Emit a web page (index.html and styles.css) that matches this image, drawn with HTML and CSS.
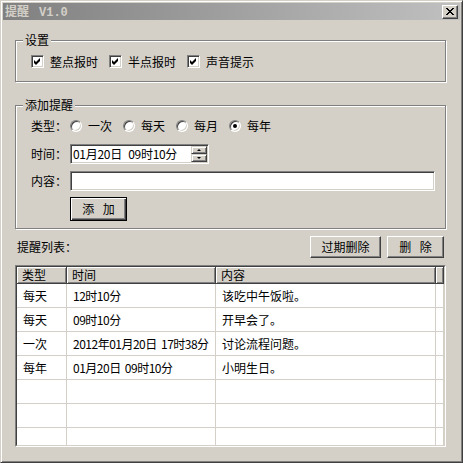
FILE: index.html
```html
<!DOCTYPE html>
<html lang="zh-CN">
<head>
  <meta charset="UTF-8" />
  <title>提醒 V1.0</title>
  <link rel="stylesheet" href="styles.css">
</head>
<body>
  <div class="window">
    <div class="titlebar">
      <span class="title">提醒<span class="ver">V1.0</span></span>
      <button class="close">
        <svg width="8" height="7" viewBox="0 0 8 7" shape-rendering="crispEdges">
          <path d="M0 0h2v1h1v1h2v-1h1v-1h2v1h-1v1h-1v1h-1v1h1v1h1v1h1v1h-2v-1h-1v-1h-2v1h-1v1h-2v-1h1v-1h1v-1h1v-1h-1v-1h-1v-1h-1z" fill="#000"/>
        </svg>
      </button>
    </div>

    <div class="content">
      <fieldset class="group group-settings">
        <legend>设置</legend>
        <div class="options">
          <label class="check"><span class="box"><svg width="7" height="7" viewBox="0 0 7 7"><polygon points="0,2 2,4 6,0 6,3 2,7 0,5" fill="#000"/></svg></span>整点报时</label>
          <label class="check"><span class="box"><svg width="7" height="7" viewBox="0 0 7 7"><polygon points="0,2 2,4 6,0 6,3 2,7 0,5" fill="#000"/></svg></span>半点报时</label>
          <label class="check"><span class="box"><svg width="7" height="7" viewBox="0 0 7 7"><polygon points="0,2 2,4 6,0 6,3 2,7 0,5" fill="#000"/></svg></span>声音提示</label>
        </div>
      </fieldset>

      <fieldset class="group group-add">
        <legend>添加提醒</legend>
        <div class="row">
          <span class="label">类型：</span>
          <div class="radios">
            <label class="radio"><span class="dot"></span>一次</label>
            <label class="radio"><span class="dot"></span>每天</label>
            <label class="radio"><span class="dot"></span>每月</label>
            <label class="radio"><span class="dot checked"></span>每年</label>
          </div>
        </div>
        <div class="row row-time">
          <span class="label">时间：</span>
          <div class="field date">
            <span>01月20日 09时10分</span>
            <div class="spin">
              <span class="spin-btn"><i class="arrow up"></i></span>
              <span class="spin-btn"><i class="arrow down"></i></span>
            </div>
          </div>
        </div>
        <div class="row row-text">
          <span class="label">内容：</span>
          <div class="field text"></div>
        </div>
        <div class="row-btn">
          <button class="btn btn-default">添 加</button>
        </div>
      </fieldset>

      <div class="list-bar">
        <span>提醒列表：</span>
        <div class="actions">
          <button class="btn btn-wide">过期删除</button>
          <button class="btn">删 除</button>
        </div>
      </div>

      <div class="list">
        <div class="list-inner">
          <div class="list-head">
            <span>类型</span><span>时间</span><span>内容</span><span></span>
          </div>
          <div class="list-row"><span>每天</span><span>12时10分</span><span>该吃中午饭啦。</span><span></span></div>
          <div class="list-row"><span>每天</span><span>09时10分</span><span>开早会了。</span><span></span></div>
          <div class="list-row"><span>一次</span><span>2012年01月20日 17时38分</span><span>讨论流程问题。</span><span></span></div>
          <div class="list-row"><span>每年</span><span>01月20日 09时10分</span><span>小明生日。</span><span></span></div>
          <div class="list-row"><span></span><span></span><span></span><span></span></div>
          <div class="list-row"><span></span><span></span><span></span><span></span></div>
          <div class="list-row"><span></span><span></span><span></span><span></span></div>
        </div>
      </div>
    </div>
  </div>
</body>
</html>
```

FILE: styles.css
```css
body {
  margin: 0;
  font-family: "Noto Sans CJK SC", sans-serif;
  font-size: 12px;
  line-height: 14px;
  word-spacing: 3px;
  color: #000;
  background: #d4d0c8;
}
.window {
  box-sizing: border-box;
  width: 463px;
  height: 463px;
  padding: 2px;
  background: #d4d0c8;
  border: 1px solid;
  border-color: #d4d0c8 #404040 #404040 #d4d0c8;
  box-shadow: inset 1px 1px 0 #fff, inset -1px -1px 0 #808080;
  display: flex;
  flex-direction: column;
}
.titlebar {
  height: 17px;
  padding: 0 2px;
  display: flex;
  align-items: center;
  justify-content: space-between;
  background: linear-gradient(to right, #808080, #c0c0c0);
}
.title {
  font-weight: bold;
  color: #d4d0c8;
}
.ver {
  margin-left: 10px;
  font-family: "Liberation Mono", monospace;
}
.close {
  box-sizing: border-box;
  width: 16px;
  height: 14px;
  padding: 0;
  border: 1px solid;
  border-color: #fff #404040 #404040 #fff;
  box-shadow: inset -1px -1px 0 #808080;
  background: #d4d0c8;
  display: flex;
  align-items: center;
  justify-content: center;
}
.content {
  padding: 0 14px 0 12px;
  display: flex;
  flex-direction: column;
}
.group {
  margin: 13px 0 0;
  padding: 8px 15px 13px;
  border: 1px solid #808080;
  box-shadow: 1px 1px 0 #fff, inset 1px 1px 0 #fff;
  min-width: 0;
}
.group legend {
  padding: 0 2px;
  margin-left: -8px;
  line-height: 14px;
  background: #d4d0c8;
}
.group-add {
  margin-top: 16px;
  padding: 4px 8px 7px 15px;
}
.options {
  display: flex;
  align-items: center;
  gap: 11px;
  height: 13px;
}
.check {
  display: flex;
  align-items: center;
  gap: 6px;
}
.box {
  box-sizing: border-box;
  width: 13px;
  height: 13px;
  border: 1px solid;
  border-color: #808080 #fff #fff #808080;
  box-shadow: inset 1px 1px 0 #404040, inset -1px -1px 0 #d4d0c8;
  background: #fff;
  display: flex;
  align-items: center;
  justify-content: center;
}
.row {
  display: flex;
  align-items: center;
  height: 20px;
}
.row-time {
  margin-top: 8px;
}
.row-text {
  margin-top: 7px;
}
.label {
  flex-shrink: 0;
  width: 36px;
  margin-right: 3px;
  white-space: nowrap;
}
.radios {
  display: flex;
  align-items: center;
  gap: 11px;
}
.radio {
  display: flex;
  align-items: center;
  gap: 6px;
}
.dot {
  box-sizing: border-box;
  width: 12px;
  height: 12px;
  border-radius: 50%;
  border: 1px solid;
  border-color: #808080 #fff #fff #808080;
  box-shadow: inset 1px 1px 0 #404040, inset -1px -1px 0 #d4d0c8;
  background: #fff;
  display: flex;
  align-items: center;
  justify-content: center;
}
.dot.checked::after {
  content: "";
  width: 4px;
  height: 4px;
  border-radius: 50%;
  background: #000;
}
.field {
  box-sizing: border-box;
  flex-shrink: 0;
  height: 20px;
  border: 1px solid;
  border-color: #808080 #fff #fff #808080;
  box-shadow: inset 1px 1px 0 #404040, inset -1px -1px 0 #d4d0c8;
  background: #fff;
}
.date {
  width: 139px;
  padding: 0 1px 0 2px;
  display: flex;
  align-items: center;
  justify-content: space-between;
  letter-spacing: -0.3px;
  word-spacing: 4px;
}
.text {
  width: 365px;
}
.spin {
  display: flex;
  flex-direction: column;
}
.spin-btn {
  box-sizing: border-box;
  width: 16px;
  height: 8px;
  border: 1px solid;
  border-color: #d4d0c8 #404040 #404040 #d4d0c8;
  box-shadow: inset 1px 1px 0 #fff, inset -1px -1px 0 #808080;
  background: #d4d0c8;
  display: flex;
  align-items: center;
  justify-content: center;
}
.arrow {
  width: 0;
  height: 0;
  border-left: 2px solid transparent;
  border-right: 2px solid transparent;
}
.arrow.up {
  border-bottom: 2px solid #000;
}
.arrow.down {
  border-top: 2px solid #000;
}
.row-btn {
  margin-top: 6px;
  padding-left: 39px;
}
.btn {
  box-sizing: border-box;
  width: 57px;
  height: 22px;
  padding: 0;
  border: 1px solid;
  border-color: #fff #404040 #404040 #fff;
  box-shadow: inset -1px -1px 0 #808080;
  background: #d4d0c8;
  font: inherit;
  word-spacing: 6px;
  color: #000;
}
.btn-default {
  height: 24px;
  border: 1px solid #000;
  box-shadow: inset 1px 1px 0 #fff, inset -1px -1px 0 #404040, inset -2px -2px 0 #808080;
}
.btn-wide {
  width: 71px;
}
.list-bar {
  margin-top: 7px;
  height: 22px;
  padding: 0 2px;
  display: flex;
  align-items: center;
  justify-content: space-between;
}
.actions {
  display: flex;
  gap: 6px;
}
.list {
  box-sizing: border-box;
  height: 182px;
  margin-top: 7px;
  border: 1px solid;
  border-color: #808080 #fff #fff #808080;
}
.list-inner {
  box-sizing: border-box;
  height: 100%;
  border: 1px solid;
  border-color: #404040 #d4d0c8 #d4d0c8 #404040;
  background: #fff;
  overflow: hidden;
}
.list-head, .list-row {
  display: grid;
  grid-template-columns: 50px 149px 220px 1fr;
}
.list-head span {
  box-sizing: border-box;
  height: 17px;
  padding-left: 5px;
  line-height: 16px;
  background: #d4d0c8;
  border-right: 1px solid #404040;
  border-bottom: 1px solid #404040;
  box-shadow: inset 1px 1px 0 #fff, inset -1px -1px 0 #808080;
}
.list-row {
  height: 24px;
  box-sizing: border-box;
  border-bottom: 1px solid #d4d0c8;
}
.list-row span {
  padding-left: 6px;
  line-height: 23px;
  border-right: 1px solid #d4d0c8;
  white-space: nowrap;
  overflow: hidden;
}
.list-row span:nth-child(2) {
  letter-spacing: -0.5px;
  word-spacing: 2px;
}
```
